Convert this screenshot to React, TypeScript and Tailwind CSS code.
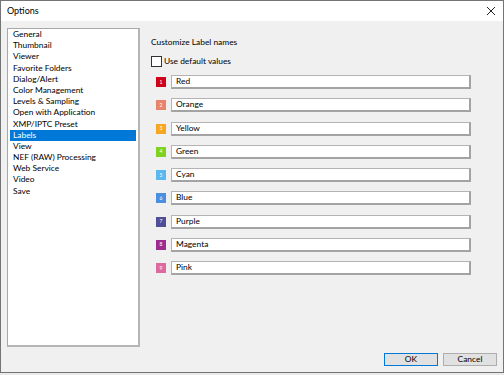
import React from "react";

const items = [
  "General",
  "Thumbnail",
  "Viewer",
  "Favorite Folders",
  "Dialog/Alert",
  "Color Management",
  "Levels & Sampling",
  "Open with Application",
  "XMP/IPTC Preset",
  "Labels",
  "View",
  "NEF (RAW) Processing",
  "Web Service",
  "Video",
  "Save",
];

const labels: { name: string; color: string }[] = [
  { name: "Red", color: "#d0021b" },
  { name: "Orange", color: "#e8846c" },
  { name: "Yellow", color: "#f5a623" },
  { name: "Green", color: "#7ed321" },
  { name: "Cyan", color: "#5ab8f0" },
  { name: "Blue", color: "#4a8fe0" },
  { name: "Purple", color: "#4f4e96" },
  { name: "Magenta", color: "#9c2c8f" },
  { name: "Pink", color: "#dc6aa0" },
];

export default function App() {
  return (
    <div
      className="w-[504px] h-[375px] bg-[#e9e9e9] text-[#000] text-[8.4px]"
      style={{ fontFamily: 'Lato, "Noto Sans", sans-serif' }}
    >
      <div className="w-[504px] h-[373px] border border-[#747474] flex flex-col">
        <div className="h-[20px] bg-white flex items-center justify-between pl-[6px] pr-[6px]">
          <span className="text-[9px]">Options</span>
          <svg width="10" height="10" viewBox="0 0 10 10" className="mr-[1px]">
            <path d="M1 1 L9 9 M9 1 L1 9" stroke="#222" strokeWidth="1" />
          </svg>
        </div>
        <div className="flex-1 bg-[#f0f0f0] flex flex-col">
          <div className="flex pl-[6px] pt-[7px]">
            <div className="w-[133px] h-[319px] bg-white border border-[#a9a9a9] border-r-2 border-b-2 border-r-[#b5b5b5] border-b-[#b5b5b5] px-[2px]">
              {items.map((it) => (
                <div
                  key={it}
                  className={
                    "h-[11.2px] leading-[11.2px] pl-[3px] whitespace-nowrap " +
                    (it === "Labels" ? "bg-[#0078d7] text-white" : "")
                  }
                >
                  {it}
                </div>
              ))}
            </div>
            <div className="ml-[11px] pt-[9px] flex flex-col">
              <div className="h-[11px] leading-[11px]">Customize Label names</div>
              <div className="flex items-center mt-[8px] h-[11px]">
                <div className="w-[11px] h-[11px] border border-[#333] bg-white" />
                <span className="ml-[2px]">Use default values</span>
              </div>
              <div className="flex flex-col gap-[9.25px] mt-[8px]">
                {labels.map((l, i) => (
                  <div key={l.name} className="flex items-center h-[14px]">
                    <div
                      className="ml-[5px] w-[10px] h-[10px] flex items-center justify-center text-white text-[5px] leading-none"
                      style={{ backgroundColor: l.color }}
                    >
                      {i + 1}
                    </div>
                    <div className="ml-[5px] w-[300px] h-[14px] bg-white border border-[#b4b4b4] border-r-2 border-b-2 border-r-[#a3a3a3] border-b-[#a3a3a3] pl-[4px] leading-[11px]">
                      {l.name}
                    </div>
                  </div>
                ))}
              </div>
            </div>
          </div>
          <div className="flex justify-end gap-[5px] pr-[6px] mt-[6px]">
            <div className="w-[54px] h-[13px] bg-[#e1e1e1] border border-[#0078d7] flex items-center justify-center">
              OK
            </div>
            <div className="w-[54px] h-[13px] bg-[#e1e1e1] border border-[#adadad] flex items-center justify-center">
              Cancel
            </div>
          </div>
        </div>
      </div>
    </div>
  );
}
